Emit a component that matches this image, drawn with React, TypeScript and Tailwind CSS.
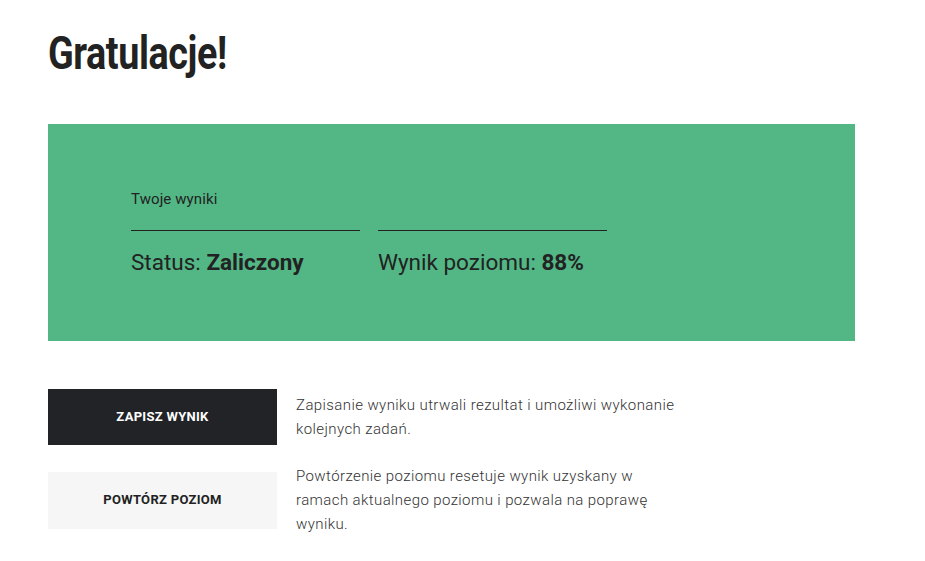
import React from "react";

export default function App() {
  return (
    <div className="min-h-[561px] bg-white pl-[48px] pr-[70px] pt-[28px]" style={{ fontFamily: "Roboto, 'Noto Sans', sans-serif" }}>
      <h1 className="m-0 h-[50px] text-[46px] font-bold leading-[50px] text-[#222222]">
        <span className="inline-block origin-left scale-x-[0.82] tracking-[-0.5px]">Gratulacje!</span>
      </h1>
      <div className="mt-[46px] w-[807px] bg-[#52b785] pb-[64px] pl-[83px] pt-[65px]">
        <div className="text-[15px] font-normal leading-[20px] tracking-[0.1px] text-[#222222]">Twoje wyniki</div>
        <div className="mt-[21px] flex gap-[18px]">
          <div className="w-[229px] border-t border-[#222222] pt-[16px] text-[22.5px] leading-[30px] text-[#222222]">
            Status: <span className="font-bold">Zaliczony</span>
          </div>
          <div className="w-[229px] border-t border-[#222222] pt-[16px] text-[22.5px] leading-[30px] text-[#222222]">
            Wynik poziomu: <span className="font-bold">88%</span>
          </div>
        </div>
      </div>
      <div className="mt-[48px] flex flex-col gap-[19px]">
        <div className="flex items-center gap-[19px]">
          <button className="flex h-[56px] w-[229px] shrink-0 items-center justify-center bg-[#222327] text-[13px] font-bold tracking-[0.3px] text-white">
            ZAPISZ WYNIK
          </button>
          <p className="m-0 w-[386px] text-[15px] font-light leading-[24px] tracking-[0.4px] text-[#333333]">
            Zapisanie wyniku utrwali rezultat i umożliwi wykonanie kolejnych zadań.
          </p>
        </div>
        <div className="flex items-center gap-[19px]">
          <button className="flex h-[57px] w-[229px] shrink-0 items-center justify-center bg-[#f6f6f6] text-[13px] font-bold tracking-[0.3px] text-[#222222]">
            POWTÓRZ POZIOM
          </button>
          <p className="m-0 w-[386px] text-[15px] font-light leading-[24px] tracking-[0.4px] text-[#333333]">
            Powtórzenie poziomu resetuje wynik uzyskany w ramach aktualnego poziomu i pozwala na poprawę wyniku.
          </p>
        </div>
      </div>
    </div>
  );
}
